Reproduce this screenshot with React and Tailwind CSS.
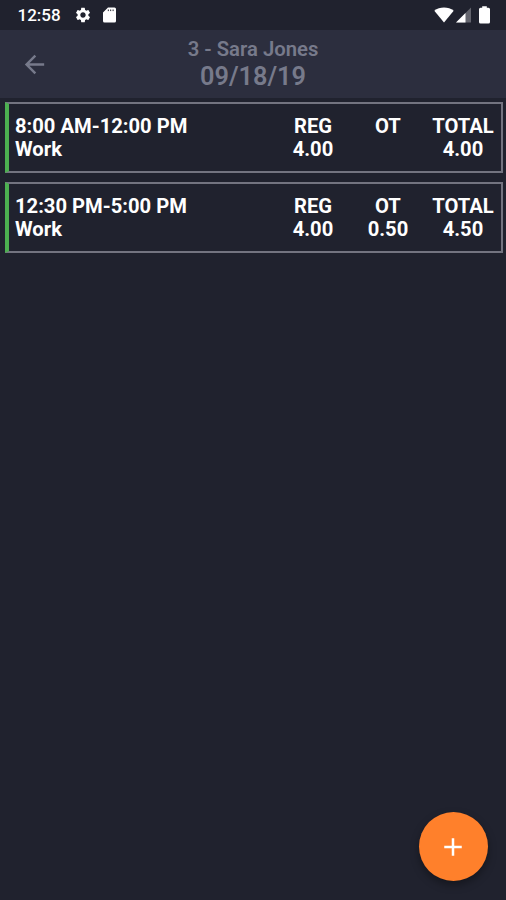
import React from 'react';
import { MdAdd, MdArrowBack, MdSettings } from 'react-icons/md';

const entries = [
    { time: '8:00 AM-12:00 PM', task: 'Work', reg: '4.00', ot: '', total: '4.00' },
    { time: '12:30 PM-5:00 PM', task: 'Work', reg: '4.00', ot: '0.50', total: '4.50' },
];

const StatusBar = () => (
    <div className="flex h-[30px] items-center justify-between bg-[#20222e] pl-[17.5px] pr-4 text-white">
        <div className="flex items-center">
            <span className="w-[56.5px] text-[17px] leading-5 font-medium">12:58</span>
            <MdSettings size={18} />
            <svg className="ml-[11px] h-4 w-[13px]" viewBox="0 0 13 16" fill="currentColor">
                <path d="M5 0.5h6.5A1.5 1.5 0 0 1 13 2v12a1.5 1.5 0 0 1-1.5 1.5h-10A1.5 1.5 0 0 1 0 14V5.5z" />
                <path d="M5.3 2.5v1.6M7.7 2.5v1.6M10.1 2.5v1.6" stroke="#20222e" strokeWidth="1" />
            </svg>
        </div>
        <div className="flex items-center">
            <svg className="h-4 w-5" viewBox="0 0 20 16" fill="currentColor">
                <path d="M10 15.6L0.3 3.7C3 1.7 6.4 0.5 10 0.5s7 1.2 9.7 3.2z" />
            </svg>
            <svg className="ml-0.5 h-4 w-[15px]" viewBox="0 0 15 16" fill="currentColor">
                <path d="M15 0.5v15H0z" fillOpacity="0.3" />
                <path d="M9.5 6v9.5H0z" />
            </svg>
            <svg className="ml-2 h-[18px] w-[11px]" viewBox="0 0 11 18" fill="currentColor">
                <path d="M3.2 0.3h4.6v1.5h1.7A1.5 1.5 0 0 1 11 3.3v12.8a1.5 1.5 0 0 1-1.5 1.5h-8A1.5 1.5 0 0 1 0 16.1V3.3a1.5 1.5 0 0 1 1.5-1.5h1.7z" />
            </svg>
        </div>
    </div>
);

const Header = () => (
    <header className="grid h-[68px] grid-cols-[70px_1fr_70px] items-center bg-[#2c2e3e] text-[#777a8b]">
        <button className="flex justify-center pr-px" aria-label="Back">
            <MdArrowBack size={29} />
        </button>
        <div className="text-center font-semibold">
            <p className="-mt-px text-[20.3px] leading-[25px]">3 - Sara Jones</p>
            <p className="text-[25.3px] leading-[29px]">09/18/19</p>
        </div>
    </header>
);

const HoursColumn = ({ label, value }) => (
    <div className="w-[75px] text-center">
        <p>{label}</p>
        <p>{value}</p>
    </div>
);

const EntryCard = ({ entry }) => (
    <div className="flex h-[71px] border-2 border-l-4 border-[#737480] border-l-[#4caf50] pt-[11px] pl-1.5 text-[20.2px] leading-[23px] font-bold text-white">
        <div className="flex-1">
            <p>{entry.time}</p>
            <p>{entry.task}</p>
        </div>
        <HoursColumn label="REG" value={entry.reg} />
        <HoursColumn label="OT" value={entry.ot} />
        <HoursColumn label="TOTAL" value={entry.total} />
    </div>
);

const App = () => {
    return (
        <div className="relative h-[900px] w-[506px] overflow-hidden bg-[#20222e] font-['Roboto',sans-serif]">
            <StatusBar />
            <Header />
            <main className="flex flex-col gap-[9px] pt-1 pr-[3.5px] pl-[5px]">
                {entries.map((entry) => (
                    <EntryCard key={entry.time} entry={entry} />
                ))}
            </main>

            <button
                className="absolute right-[18.5px] bottom-[19px] flex size-[69px] items-center justify-center rounded-full bg-[#ff802b] text-white shadow-[0_4px_8px_rgba(0,0,0,0.35)]"
                aria-label="Add entry"
            >
                <MdAdd size={30} />
            </button>
        </div>
    );
};

export default App;
